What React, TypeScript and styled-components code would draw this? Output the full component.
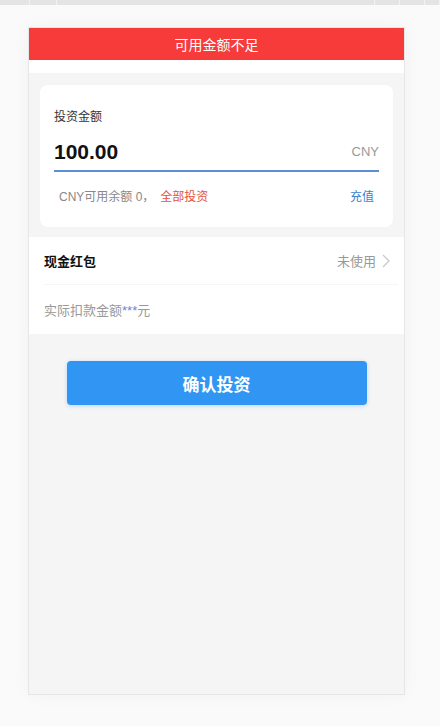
import React from 'react';
import styled, { createGlobalStyle } from 'styled-components';

const GlobalStyle = createGlobalStyle`
  html, body {
    margin: 0;
    padding: 0;
    background: #fafafa;
    font-family: 'Liberation Sans', 'Noto Sans CJK SC', sans-serif;
  }
  * {
    box-sizing: border-box;
  }
`;

const tabs = [30, 27, 318, 25, 25, 15];

const App = () => {
  return (
    <>
      <GlobalStyle />
      <Page>
        <TopStrip>
          {tabs.map((w, i) => (
            <TabPiece key={i} $width={w} />
          ))}
        </TopStrip>

        <Phone>
          <Banner>可用金额不足</Banner>
          <WhiteGap />

          <CardArea>
            <AmountCard>
              <Label>投资金额</Label>
              <AmountRow>
                <Amount>100.00</Amount>
                <Currency>CNY</Currency>
              </AmountRow>
              <BalanceRow>
                <span>
                  CNY可用余额 0，
                  <AllIn>全部投资</AllIn>
                </span>
                <Recharge>充值</Recharge>
              </BalanceRow>
            </AmountCard>
          </CardArea>

          <Section>
            <Row>
              <RowTitle>现金红包</RowTitle>
              <RowValue>
                未使用
                <svg width="8" height="14" viewBox="0 0 8 14">
                  <path d="M1 1l6 6-6 6" fill="none" stroke="#c8c8c8" strokeWidth="1.2" />
                </svg>
              </RowValue>
            </Row>
            <Row $last>
              <Deduct>
                实际扣款金额<Stars>***</Stars>元
              </Deduct>
            </Row>
          </Section>

          <ButtonWrap>
            <ConfirmButton>确认投资</ConfirmButton>
          </ButtonWrap>
        </Phone>
      </Page>
    </>
  );
};

export default App;

const Page = styled.div`
  width: 440px;
  height: 726px;
  overflow: hidden;
`;

const TopStrip = styled.div`
  display: flex;
  height: 5px;
  background: #e4e4e4;
`;

const TabPiece = styled.div<{ $width: number }>`
  width: ${(p) => p.$width}px;
  height: 100%;
  border-right: 1px solid #f2f2f2;
`;

const Phone = styled.div`
  margin: 22px 0 0 28px;
  width: 377px;
  height: 668px;
  background: #f5f5f5;
  border: 1px solid #e6e6e6;
  box-shadow: 0 0 16px rgba(0, 0, 0, 0.04);
  display: flex;
  flex-direction: column;
`;

const Banner = styled.div`
  height: 32px;
  background: #f73a3a;
  color: #fff;
  font-size: 14px;
  display: flex;
  align-items: center;
  justify-content: center;
`;

const WhiteGap = styled.div`
  height: 13px;
  background: #fff;
`;

const CardArea = styled.div`
  padding: 12px 11px 10px;
`;

const AmountCard = styled.div`
  background: #fff;
  border-radius: 8px;
  padding: 24px 14px 22px;
`;

const Label = styled.div`
  font-size: 12px;
  color: #333;
  line-height: 16px;
`;

const AmountRow = styled.div`
  display: flex;
  align-items: center;
  justify-content: space-between;
  margin-top: 11px;
  height: 36px;
  padding-bottom: 3px;
  border-bottom: 2px solid #5b8fd3;
`;

const Amount = styled.div`
  font-size: 21px;
  font-weight: 700;
  color: #111;
`;

const Currency = styled.div`
  font-size: 13px;
  color: #999;
`;

const BalanceRow = styled.div`
  display: flex;
  justify-content: space-between;
  align-items: center;
  padding: 0 5px;
  margin-top: 17px;
  font-size: 12px;
  color: #888;
  line-height: 16px;
`;

const AllIn = styled.span`
  color: #e0533f;
  margin-left: 6px;
`;

const Recharge = styled.span`
  color: #3d7fcc;
`;

const Section = styled.div`
  background: #fff;
  padding: 0 6px 0 15px;
`;

const Row = styled.div<{ $last?: boolean }>`
  height: ${(p) => (p.$last ? '49px' : '48px')};
  display: flex;
  align-items: center;
  justify-content: space-between;
  border-bottom: ${(p) => (p.$last ? 'none' : '1px solid #f6f6f6')};
`;

const RowTitle = styled.div`
  font-size: 13px;
  font-weight: 700;
  color: #111;
`;

const RowValue = styled.div`
  display: flex;
  align-items: center;
  gap: 6px;
  font-size: 13px;
  color: #999;
  padding-right: 8px;
`;

const Deduct = styled.div`
  font-size: 13px;
  color: #999;
`;

const Stars = styled.span`
  color: #6a84d8;
`;

const ButtonWrap = styled.div`
  display: flex;
  justify-content: center;
  padding-top: 27px;
`;

const ConfirmButton = styled.button`
  width: 300px;
  height: 44px;
  border: none;
  border-radius: 4px;
  background: #3196f3;
  color: #fff;
  font-family: 'Liberation Sans', 'Noto Sans CJK SC', sans-serif;
  font-size: 17px;
  font-weight: 700;
  box-shadow: 0 1px 4px rgba(49, 150, 243, 0.3);
  cursor: pointer;
`;
